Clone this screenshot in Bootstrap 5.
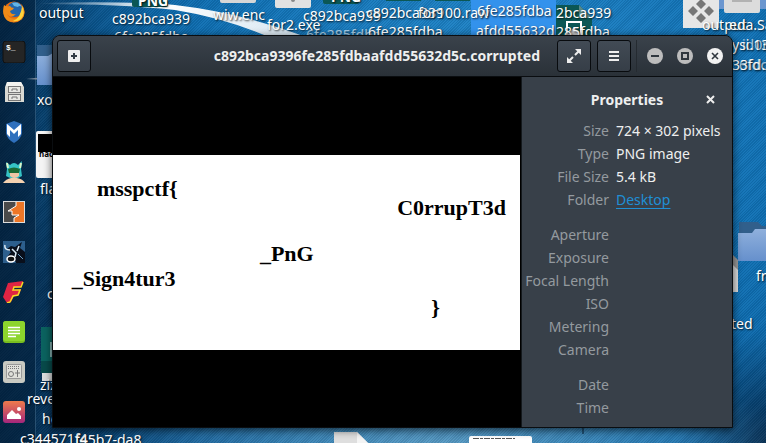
<!DOCTYPE html>
<html lang="en">
<head>
<meta charset="utf-8">
<meta name="viewport" content="width=device-width, initial-scale=1">
<title>Image Viewer</title>
<link href="https://cdn.jsdelivr.net/npm/bootstrap@5.3.0/dist/css/bootstrap.min.css" rel="stylesheet">
<style>
  body { font-family: "Noto Sans", "Open Sans", sans-serif; font-size: 14px; line-height: 20px; background: #062f52; }
  .desktop {
    background:
      repeating-linear-gradient(135deg, #00102018 0 1px, #ffffff08 1px 2px),
      radial-gradient(ellipse 46% 20% at 58% 101%, #5b9cc4 0, #5b9cc400 100%),
      radial-gradient(ellipse 12% 26% at 100% 100%, #04294c 0, #04294c00 100%),
      radial-gradient(ellipse 64% 100% at 64% 24%, #2389cc 0, #0f70b4 62%, #0f70b400 100%),
      linear-gradient(90deg, #04294a 0, #07508a 24%, #0b66a8 100%);
  }
  .scene { inset: 0; width: 100%; height: 100%; }
  .pin { position: absolute; color: #fff; white-space: nowrap; text-shadow: 1px 1px 2px #000c; }
  .dim { opacity: .6; }
  .dock { width: 36px; padding-top: 1px; gap: 18px; background: #04203a88; border-right: 1px solid #5d8db066; }
  .dock button, .plain { padding: 0; border: 0; background: none; line-height: 0; }
  .stage { padding: 35px 33px 15px 16px; }
  .viewer { border: 1px solid #0a0d10; border-radius: 8px 8px 0 0; box-shadow: 0 2px 8px #000a; background: #384049; }
  .titlebar { height: 41px; padding: 0 9px 0 4px; background: linear-gradient(#3a424b, #2a3138); border-bottom: 1px solid #0a0d10; }
  .tool { width: 34px; height: 32px; padding: 0; border: 1px solid #080b0e; border-radius: 3px; background: linear-gradient(#424b55, #363e47); color: #eee; line-height: 0; }
  .tool + .tool { margin-left: 6px; }
  .caption { font-size: 14px; font-weight: 700; color: #eeefef; padding-right: 17px; }
  .rule { width: 1px; height: 32px; margin: 0 10px 0 5px; background: #252b31; }
  .canvas-area { background: #000; padding-right: 1px; }
  .sheet { background: #fff; aspect-ratio: 467 / 195; font: 700 22px/24px "Liberation Serif", serif; color: #000; }
  .sheet span { position: absolute; }
  .w1 { left: 9.4%; top: 11.3%; }
  .w2 { right: 3%; top: 21.5%; }
  .w3 { left: 44.3%; top: 45%; }
  .w4 { left: 4%; top: 57.5%; }
  .w5 { left: 81%; top: 72.5%; }
  .props { width: 211px; border-left: 1px solid #14191d; color: #eeefef; }
  .props-head { display: grid; grid-template-columns: 1fr auto 1fr; line-height: 23px; padding: 11px 17px 8px; }
  .props-head h2 { font-size: 14px; line-height: 23px; font-weight: 700; }
  .facts { display: grid; grid-template-columns: 87px 1fr; column-gap: 7px; line-height: 23px; margin-bottom: 12px; white-space: nowrap; }
  .facts dt { font-weight: 400; text-align: right; color: #949a9f; }
  .facts dd { margin: 0; }
  .facts a { color: #1f8fd6; text-underline-offset: 3px; }
</style>
<script src="https://cdn.jsdelivr.net/npm/bootstrap@5.3.0/dist/js/bootstrap.bundle.min.js"></script>
</head>
<body>
<div class="desktop position-relative overflow-hidden vh-100 d-flex">

  <svg class="scene position-absolute" viewBox="0 0 766 443" preserveAspectRatio="xMinYMin slice" aria-hidden="true">
    <defs>
      <linearGradient id="fold" x1="0" y1="0" x2="0" y2="1"><stop offset="0" stop-color="#8fb0dc"/><stop offset="1" stop-color="#6690cc"/></linearGradient>
      <linearGradient id="streak" x1="0" y1="0" x2="1" y2="0"><stop offset="0" stop-color="#fff" stop-opacity="0"/><stop offset=".35" stop-color="#fff"/><stop offset="1" stop-color="#fff" stop-opacity=".75"/></linearGradient>
    </defs>
    <path d="M40 3Q130 1 175 5Q270 16 365 62L320 62Q250 22 175 10Q120 4 40 4Z" fill="url(#streak)"/>
    <path d="M26 79L44 77V80Z" fill="#789"/>
    <rect x="132" y="-20" width="36" height="27" rx="2" fill="#0b5755"/>
    <rect x="220" y="-20" width="36" height="23" rx="2" fill="#d6d6d6"/>
    <rect x="275" y="-20" width="36" height="28" rx="2" fill="#e2e2e2"/><circle cx="293" cy="0" r="2" fill="#888"/>
    <rect x="323" y="-20" width="36" height="24" rx="2" fill="#0b5755"/>
    <path d="M386 0H421V1H386ZM435 0H470V1H435Z" fill="#0b5755"/>
    <rect x="471" y="0" width="85" height="36" fill="#3392ec"/>
    <path d="M556 5H579L592 18V40H556Z" fill="#0b5755"/><path d="M579 5V18H592Z" fill="#5a8a88"/>
    <rect x="567" y="22" width="14" height="14" fill="none" stroke="#fff" stroke-width="2"/><path d="M566 36L574 27L582 36Z" fill="#ccc"/>
    <path d="M683 0H719V28H683Z" fill="#e6e6e6"/>
    <path d="M701 -1l5 5-5 5-5-5zM693 6l5 5-5 5-5-5zM709 6l5 5-5 5-5-5zM701 13l5 5-5 5-5-5z" fill="#777"/>
    <path d="M719 0H766V9H719Z" fill="#6b96cf"/><rect x="724" y="-10" width="36" height="23" rx="2" fill="#dcdcdc"/><path d="M732 1H752" stroke="#888"/>
    <path d="M37 45H60V60H37Z" fill="#315f8b"/><path d="M37 56H48L53 53H60V85H37Z" fill="url(#fold)"/>
    <rect x="36" y="131" width="30" height="47" rx="2" fill="#f4f4f4"/><path d="M38 134H60V152H38Z"/>
    <path d="M41 327H60V373H41Z" fill="#0b6360"/><path d="M41 361H60V373H41Z" fill="#084a4a"/><path d="M42 373H60V381H42Z" fill="#ddd"/><path d="M51 342V357" stroke="#fff"/>
    <path d="M739 222H758L762 226H766V236H739Z" fill="#315f8b"/><path d="M738 233H752L755 229H766V261H738Z" fill="url(#fold)"/>
    <path d="M725 253L738 266V292H725Z" fill="#ddd"/><path d="M733 255L738 260V270L733 265Z" fill="#999"/>
    <path d="M334 432H357L368 443H334Z" fill="#dedede"/><path d="M357 432L368 443H357Z" fill="#f4f4f4"/>
    <rect x="469" y="436" width="63" height="16" rx="2" fill="#fff"/><path d="M473 438.500H515" stroke="#555" stroke-dasharray="6 1 3 1"/>
    <path d="M583 428V434" stroke="#05203a"/>
  </svg>

  <nav class="dock d-flex flex-column align-items-center justify-content-start flex-shrink-0 pe-2" aria-label="Dock">
    <button type="button" aria-label="Firefox"><svg width="24" height="22" viewBox="0 0 24 22"><circle cx="12" cy="11" r="10.500" fill="#e66a10"/><circle cx="13" cy="8.500" r="7.500" fill="#2366ad"/><path d="M10 2Q17 0 20 6Q17 4 16 6L12 5Z" fill="#62b4e6"/><path d="M2 4Q4 6 8 5Q9 7 12 7Q11 9 8 10Q9 14 14 13Q9 18 5 13Q8 19 15 17Q21 14 20 4Q25 12 20 18Q14 23 6 20Q-1 15 2 4Z" fill="#f08b17"/><path d="M20 5Q24 12 19 18Q15 21 11 20Q19 17 20 5Z" fill="#ffd43c"/></svg></button>
    <button type="button" aria-label="Terminal"><svg width="24" height="22" viewBox="0 0 24 22"><rect x="1" y="0" width="22" height="22" rx="3" fill="#252525" stroke="#111"/><text x="4" y="9" font-family="Liberation Mono, monospace" font-size="8" font-weight="700" fill="#fff">$_</text></svg></button>
    <button type="button" aria-label="Files"><svg width="24" height="22" viewBox="0 0 24 22"><path d="M5 1H19L22 6V21H3V6Z" fill="#d9d9d3"/><path d="M5 1H19L21 5H4Z" fill="#f3f3ef"/><g fill="#e8e8e3" stroke="#777"><rect x="6.500" y="5.500" width="12" height="6"/><rect x="6.500" y="13.500" width="12" height="6"/><path d="M10 10V8H15V10M10 18V16H15V18" fill="none"/></g></svg></button>
    <button type="button" aria-label="Metasploit"><svg width="24" height="22" viewBox="0 0 24 22"><path d="M12 0L20 3V12Q19 18 12 22Q5 18 4 12V3Z" fill="#2f70bd"/><path d="M5 3L12 9L19 3V13L16 16V9L12 13L8 9V16L5 13Z" fill="#fff"/></svg></button>
    <button type="button" aria-label="Armitage"><svg width="24" height="22" viewBox="0 0 24 22"><path d="M5 8L4 1L8 4Q12 0 16 4L20 0L19 8L20 15L16 17H8L4 15Z" fill="#35c3c6"/><path d="M8 8H17V15Q12 19 8 15Z" fill="#f0c6a5"/><path d="M6 8Q12 5 18 8L17 12H7Z" fill="#1b6a35"/><path d="M1 22Q4 18 9 17H15Q21 18 23 22Z" fill="#f4d1b0"/><path d="M5 2l1 5M19 2l-1 5" stroke="#d8f5c8" stroke-width="2"/></svg></button>
    <button type="button" aria-label="Burp Suite"><svg width="24" height="22" viewBox="0 0 24 22"><rect x="1.500" y=".5" width="21" height="21" fill="#4a4a4a" stroke="#ddd"/><path d="M14 1H22V21H12V17L17 14H10V10H6L14 5Z" fill="#ed7627"/><path d="M14 1V5L6 10H10V14H17L12 17V21" fill="none" stroke="#fff"/></svg></button>
    <button type="button" aria-label="Bull debugger"><svg width="24" height="22" viewBox="0 0 24 22"><rect x="1" width="22" height="22" fill="#2d5f8d"/><path d="M5 8L9 5L13 6L20 1L18 7L23 11V22H14L12 17L8 20L5 16L9 11Z" fill="#090f1b"/><path d="M3 4Q2 9 8 9M10 8L14 12L13 16M17 5L15 10" fill="none" stroke="#dcebf5" stroke-width="1.500"/><ellipse cx="9" cy="18" rx="4" ry="3" fill="#111" stroke="#fff" stroke-width="1.500"/><path d="M16 13L21 18" stroke="#6b9dc3"/></svg></button>
    <button type="button" aria-label="Faraday"><svg width="24" height="22" viewBox="0 0 24 22"><path d="M6 2L21 0L19 6L12 7V9L19 8L17 14L12 15L9 21L5 22L1 16Z" fill="#df2443"/><path d="M21 1L19 6H12L11 9H18L16 14L11 15L8 21L5 22" fill="none" stroke="#f5da24" stroke-width="1.500"/></svg></button>
    <button type="button" aria-label="Text editor"><svg width="24" height="22" viewBox="0 0 24 22"><rect x="1" width="22" height="22" rx="3" fill="#78bd20"/><rect x="1" width="22" height="20" rx="3" fill="#8dd52d"/><path d="M6 6.500H18M6 9.500H18M6 12.500H18M6 15.500H14" stroke="#fff" stroke-width="1.300"/></svg></button>
    <button type="button" aria-label="Tweaks"><svg width="24" height="22" viewBox="0 0 24 22"><rect x="1" width="22" height="22" rx="3" fill="#c9cac2"/><rect x="4.500" y="3.500" width="15" height="14" rx="1" fill="#e0e0da" stroke="#999"/><path d="M6 5.500H18M6 7.500H18" stroke="#777" stroke-dasharray="1 1"/><circle cx="9" cy="13" r="2.500" fill="none" stroke="#777"/><path d="M15.500 9V16M13 12H18" stroke="#777"/></svg></button>
    <button type="button" aria-label="Photos"><svg width="24" height="22" viewBox="0 0 24 22"><defs><linearGradient id="dusk" x1="0" y1="0" x2="0" y2="1"><stop offset="0" stop-color="#ef7b4c"/><stop offset="1" stop-color="#a5267c"/></linearGradient></defs><rect x="1" width="22" height="22" rx="3" fill="url(#dusk)"/><path d="M5 18V14L10 9L14 13L16 12L19 15V18Z" fill="#fff"/><circle cx="17" cy="8" r="2" fill="#fff"/></svg></button>
  </nav>

  <div aria-hidden="true">
    <span class="pin" style="left:39px;top:3px">output</span>
    <span class="pin fw-bold" style="left:138px;top:-9px">PNG</span>
    <span class="pin" style="left:112px;top:9px">c892bca939</span>
    <span class="pin" style="left:114px;top:27px">6fe285fdba</span>
    <span class="pin" style="left:213px;top:5px">wiw.enc</span>
    <span class="pin" style="left:267px;top:15px">for2.exe</span>
    <span class="pin fw-bold" style="left:331px;top:-13px">PNG</span>
    <span class="pin" style="left:303px;top:6px">c892bca939</span>
    <span class="pin dim" style="left:306px;top:25px">6fe285fdba</span>
    <span class="pin" style="left:366px;top:3px">c892bca939</span>
    <span class="pin" style="left:368px;top:22px">6fe285fdba</span>
    <span class="pin" style="left:418px;top:3px">for100.raw</span>
    <span class="pin" style="left:477px;top:1px">6fe285fdba</span>
    <span class="pin" style="left:476px;top:21px">afdd55632d</span>
    <span class="pin" style="left:556px;top:3px">2bca939</span>
    <span class="pin" style="left:556px;top:22px">285fdba</span>
    <span class="pin" style="left:702px;top:15px">output</span>
    <span class="pin" style="left:729px;top:15px">eda.Sa</span>
    <span class="pin" style="left:732px;top:35px">ysi.13-</span>
    <span class="pin dim" style="left:742px;top:35px">id0n</span>
    <span class="pin" style="left:732px;top:55px">33fd.19</span>
    <span class="pin dim" style="left:739px;top:55px">6fdc</span>
    <span class="pin" style="left:37px;top:90px">xo</span>
    <span class="pin fw-bold text-black" style="left:39px;top:144px;font-size:8px;text-shadow:none">hack</span>
    <span class="pin" style="left:40px;top:179px">fla</span>
    <span class="pin" style="left:47px;top:284px">c</span>
    <span class="pin" style="left:40px;top:375px">ziz</span>
    <span class="pin" style="left:27px;top:389px">reve</span>
    <span class="pin" style="left:42px;top:409px">he</span>
    <span class="pin" style="left:20px;top:429px">c344571f4</span>
    <span class="pin" style="left:75px;top:430px">f45b7-da8</span>
    <span class="pin" style="left:756px;top:266px">fr</span>
    <span class="pin" style="left:731px;top:314px">ted</span>
  </div>

  <main class="stage flex-grow-1 d-flex">
    <section class="viewer position-relative flex-grow-1 d-flex flex-column overflow-hidden" aria-label="Image viewer">
      <header class="titlebar d-flex align-items-center flex-shrink-0">
        <button class="tool" type="button" aria-label="Zoom in"><svg width="12" height="12" viewBox="0 0 12 12"><rect width="12" height="12" rx="1" fill="#eee"/><path d="M6 3V9M3 6H9" stroke="#333b43" stroke-width="2"/></svg></button>
        <h1 class="caption flex-grow-1 text-end text-nowrap mb-0">c892bca9396fe285fdbaafdd55632d5c.corrupted</h1>
        <button class="tool" type="button" aria-label="Fullscreen"><svg width="14" height="14" viewBox="0 0 14 14"><path d="M8 0H14V6ZM0 8L6 14H0Z" fill="#eee"/><path d="M12 2L8 6M2 12L6 8" stroke="#eee" stroke-width="2"/></svg></button>
        <button class="tool" type="button" aria-label="Menu"><svg width="10" height="12" viewBox="0 0 10 12"><path d="M0 2H10M0 6H10M0 10H10" stroke="#eee" stroke-width="2"/></svg></button>
        <span class="rule"></span>
        <div class="d-flex" style="gap:14px">
          <button class="plain" type="button" aria-label="Minimize"><svg width="16" height="16" viewBox="0 0 16 16"><circle cx="8" cy="8" r="8" fill="#bdbdbd"/><path d="M4 8H12" stroke="#30373e" stroke-width="2"/></svg></button>
          <button class="plain" type="button" aria-label="Maximize"><svg width="16" height="16" viewBox="0 0 16 16"><circle cx="8" cy="8" r="8" fill="#bdbdbd"/><rect x="5" y="5" width="6" height="6" fill="none" stroke="#30373e" stroke-width="2"/></svg></button>
          <button class="plain" type="button" aria-label="Close"><svg width="16" height="16" viewBox="0 0 16 16"><circle cx="8" cy="8" r="8" fill="#f2f2f2"/><path d="M5 5L11 11M11 5L5 11" stroke="#30373e" stroke-width="1.600"/></svg></button>
        </div>
      </header>
      <div class="d-flex flex-grow-1">
        <div class="canvas-area flex-grow-1 d-flex align-items-center">
          <div class="sheet position-relative w-100">
            <span class="w1">msspctf{</span>
            <span class="w2">C0rrupT3d</span>
            <span class="w3">_PnG</span>
            <span class="w4">_Sign4tur3</span>
            <span class="w5">}</span>
          </div>
        </div>
        <aside class="props flex-shrink-0">
          <div class="props-head align-items-center">
            <span></span>
            <h2 class="mb-0">Properties</h2>
            <button class="plain ms-auto" type="button" aria-label="Close properties"><svg width="9" height="9" viewBox="0 0 9 9"><path d="M1 1L8 8M8 1L1 8" stroke="#eee" stroke-width="2"/></svg></button>
          </div>
          <dl class="facts">
            <dt>Size</dt><dd>724 × 302 pixels</dd>
            <dt>Type</dt><dd>PNG image</dd>
            <dt>File Size</dt><dd>5.4 kB</dd>
            <dt>Folder</dt><dd><a href="#desktop">Desktop</a></dd>
          </dl>
          <dl class="facts">
            <dt>Aperture</dt><dd></dd>
            <dt>Exposure</dt><dd></dd>
            <dt>Focal Length</dt><dd></dd>
            <dt>ISO</dt><dd></dd>
            <dt>Metering</dt><dd></dd>
            <dt>Camera</dt><dd></dd>
          </dl>
          <dl class="facts mb-0">
            <dt>Date</dt><dd></dd>
            <dt>Time</dt><dd></dd>
          </dl>
        </aside>
      </div>
    </section>
  </main>
</div>
</body>
</html>
